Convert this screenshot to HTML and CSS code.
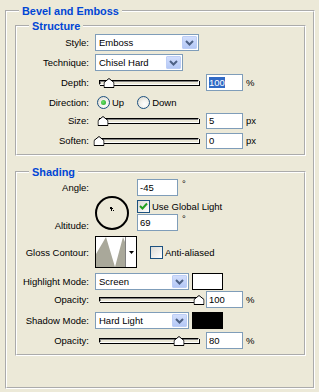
FILE: index.html
```html
<!DOCTYPE html>
<html>
<head>
<meta charset="utf-8">
<link rel="stylesheet" href="styles.css">
</head>
<body>
<div class="panel">
  <fieldset class="group outer">
    <legend class="title title-outer">Bevel and Emboss</legend>

    <fieldset class="group structure">
      <legend class="title">Structure</legend>

      <div class="row">
        <span class="lbl">Style:</span>
        <div class="ctrl">
          <div class="select sel-style"><span class="sel-text">Emboss</span><span class="drop"><svg width="9" height="6" viewBox="0 0 9 6"><path d="M1 1 L4.5 4.5 L8 1" stroke="#4D6185" stroke-width="2" fill="none"/></svg></span></div>
        </div>
      </div>

      <div class="row">
        <span class="lbl">Technique:</span>
        <div class="ctrl">
          <div class="select sel-tech"><span class="sel-text">Chisel Hard</span><span class="drop"><svg width="9" height="6" viewBox="0 0 9 6"><path d="M1 1 L4.5 4.5 L8 1" stroke="#4D6185" stroke-width="2" fill="none"/></svg></span></div>
        </div>
      </div>

      <div class="row">
        <span class="lbl">Depth:</span>
        <div class="ctrl">
          <div class="slider"><div class="track"></div><svg class="thumb" style="left:10%" width="11" height="10" viewBox="0 0 11 10"><polygon points="0.5,4.5 5.5,0.5 10.5,4.5 10.5,9.5 0.5,9.5" fill="#fff" stroke="#000"/></svg></div>
          <div class="input"><span class="selected">100</span></div>
          <span class="unit">%</span>
        </div>
      </div>

      <div class="row row-dir">
        <span class="lbl">Direction:</span>
        <div class="ctrl">
          <span class="radio on"><i></i></span><span class="opt">Up</span>
          <span class="radio radio-down"></span><span class="opt">Down</span>
        </div>
      </div>

      <div class="row row-size">
        <span class="lbl">Size:</span>
        <div class="ctrl">
          <div class="slider"><div class="track"></div><svg class="thumb" style="left:4%" width="11" height="10" viewBox="0 0 11 10"><polygon points="0.5,4.5 5.5,0.5 10.5,4.5 10.5,9.5 0.5,9.5" fill="#fff" stroke="#000"/></svg></div>
          <div class="input">5</div>
          <span class="unit">px</span>
        </div>
      </div>

      <div class="row row-soften">
        <span class="lbl">Soften:</span>
        <div class="ctrl">
          <div class="slider"><div class="track"></div><svg class="thumb" style="left:0%" width="11" height="10" viewBox="0 0 11 10"><polygon points="0.5,4.5 5.5,0.5 10.5,4.5 10.5,9.5 0.5,9.5" fill="#fff" stroke="#000"/></svg></div>
          <div class="input">0</div>
          <span class="unit">px</span>
        </div>
      </div>
    </fieldset>

    <fieldset class="group shading">
      <legend class="title">Shading</legend>

      <div class="angle-block">
        <span class="lbl lbl-angle">Angle:</span>
        <svg class="dial" width="36" height="36" viewBox="0 0 36 36">
          <circle cx="18" cy="18" r="16" fill="none" stroke="#000" stroke-width="2"/>
          <rect x="16" y="12" width="2" height="2" fill="#000"/>
          <rect x="18" y="13" width="1" height="1" fill="#000"/>
          <rect x="17" y="14" width="1" height="2" fill="#000"/>
          <rect x="19" y="15" width="1" height="1" fill="#000"/>
        </svg>
        <div class="ctrl ctrl-angle"><div class="input input-angle">-45</div><span class="deg">°</span></div>
        <div class="ctrl ctrl-global"><span class="check on"><svg width="11" height="11" viewBox="0 0 11 11"><path d="M2 5 L4.5 7.5 L9 2.5" stroke="#21A121" stroke-width="2" fill="none"/></svg></span><span class="opt">Use Global Light</span></div>
        <span class="lbl lbl-alt">Altitude:</span>
        <div class="ctrl ctrl-alt"><div class="input input-angle">69</div><span class="deg">°</span></div>
      </div>

      <div class="row row-gloss">
        <span class="lbl">Gloss Contour:</span>
        <div class="ctrl">
          <div class="contour">
            <svg width="29" height="30" viewBox="0 0 29 30"><polygon points="0,30 0,17 10,0 19,30 27,0 29,5 29,30" fill="#A9A89A"/></svg>
            <span class="contour-drop"><svg width="5" height="3" viewBox="0 0 5 3"><polygon points="0,0 5,0 2.5,3" fill="#000"/></svg></span>
          </div>
          <span class="check check-aa"></span><span class="opt">Anti-aliased</span>
        </div>
      </div>

      <div class="row row-mode">
        <span class="lbl">Highlight Mode:</span>
        <div class="ctrl">
          <div class="select sel-mode"><span class="sel-text">Screen</span><span class="drop"><svg width="9" height="6" viewBox="0 0 9 6"><path d="M1 1 L4.5 4.5 L8 1" stroke="#4D6185" stroke-width="2" fill="none"/></svg></span></div>
          <span class="swatch swatch-white"></span>
        </div>
      </div>

      <div class="row row-op">
        <span class="lbl">Opacity:</span>
        <div class="ctrl">
          <div class="slider"><div class="track"></div><svg class="thumb" style="left:100%" width="11" height="10" viewBox="0 0 11 10"><polygon points="0.5,4.5 5.5,0.5 10.5,4.5 10.5,9.5 0.5,9.5" fill="#fff" stroke="#000"/></svg></div>
          <div class="input">100</div>
          <span class="unit">%</span>
        </div>
      </div>

      <div class="row row-mode2">
        <span class="lbl">Shadow Mode:</span>
        <div class="ctrl">
          <div class="select sel-mode"><span class="sel-text">Hard Light</span><span class="drop"><svg width="9" height="6" viewBox="0 0 9 6"><path d="M1 1 L4.5 4.5 L8 1" stroke="#4D6185" stroke-width="2" fill="none"/></svg></span></div>
          <span class="swatch swatch-black"></span>
        </div>
      </div>

      <div class="row row-op2">
        <span class="lbl">Opacity:</span>
        <div class="ctrl">
          <div class="slider"><div class="track"></div><svg class="thumb" style="left:80%" width="11" height="10" viewBox="0 0 11 10"><polygon points="0.5,4.5 5.5,0.5 10.5,4.5 10.5,9.5 0.5,9.5" fill="#fff" stroke="#000"/></svg></div>
          <div class="input">80</div>
          <span class="unit">%</span>
        </div>
      </div>
    </fieldset>
  </fieldset>
</div>
</body>
</html>
```

FILE: styles.css
```css
* { box-sizing: border-box; }
html, body { margin: 0; padding: 0; }
body {
  background: #ECE9D8;
  width: 319px;
  height: 392px;
  overflow: hidden;
  font-family: "Liberation Sans", Arial, sans-serif;
  font-size: 9.5px;
  color: #000;
}
.panel { padding: 5px 4px 0 5px; }

.group {
  border: 2px groove #fff;
  margin: 0;
  min-width: 0;
}
.title {
  font-weight: bold;
  color: #0046D5;
  font-size: 10.9px;
  line-height: 12px;
  padding: 0 3px;
  margin-left: 12px;
}
.outer { padding: 3px 7px 31px 8px; }
.title-outer { margin-left: 4px; }

.structure { padding: 2px 0 6px 0; }
.shading { margin-top: 10px; padding: 1px 0 5px 0; }

.row {
  display: grid;
  grid-template-columns: 72px 1fr;
  column-gap: 6px;
  align-items: center;
  height: 17px;
  margin-top: 3px;
}
.structure legend + .row { margin-top: 0; }
.lbl { text-align: right; white-space: nowrap; }
.ctrl { display: flex; align-items: center; height: 100%; }

.select {
  display: flex;
  align-items: center;
  justify-content: space-between;
  height: 17px;
  background: #fff;
  border: 1px solid #7F9DB9;
  padding: 1px 1px 1px 3px;
}
.sel-style { width: 104px; }
.sel-tech { width: 88px; }
.sel-mode { width: 94px; }
.sel-text { white-space: nowrap; }
.drop {
  width: 15px;
  height: 13px;
  display: flex;
  align-items: center;
  justify-content: center;
  background: linear-gradient(#D2DEFC, #B4C8F6);
  border: 1px solid #BDCEF6;
  border-radius: 1px;
}

.slider {
  position: relative;
  width: 100px;
  margin: 0 7px 0 4px;
  height: 17px;
  display: flex;
  align-items: center;
}
.track {
  width: 100%;
  height: 5px;
  border: 1px solid #000;
  border-right-color: #fff;
  border-bottom-color: #fff;
  box-shadow: inset 1px 1px 0 #808080, 1px 1px 0 #000;
  background: #ECE9D8;
}
.thumb {
  position: absolute;
  top: 4px;
  transform: translateX(-50%);
}

.input {
  width: 37px;
  height: 17px;
  background: #fff;
  border: 1px solid #7F9DB9;
  padding: 0 2px;
  line-height: 15px;
}
.selected { background: #316AC5; color: #fff; }
.unit { margin-left: 3px; }
.deg { margin-left: 4px; align-self: flex-start; line-height: 10px; }

.row-dir { margin-top: 3px; }
.row-size { margin-top: 1px; height: 16px; }
.row-soften { margin-top: 4px; height: 16px; }
.row-size .input, .row-soften .input { height: 16px; line-height: 14px; }

.radio {
  width: 13px;
  height: 13px;
  border-radius: 50%;
  border: 1px solid #1C5180;
  background: radial-gradient(circle at 60% 65%, #fff 0%, #F4F3EE 40%, #D6D3C6 100%);
  display: inline-flex;
  align-items: center;
  justify-content: center;
  margin-left: 2px;
}
.radio.on i {
  width: 5px;
  height: 5px;
  border-radius: 50%;
  background: radial-gradient(circle at 40% 40%, #6BE36B, #21A121);
}
.radio-down { margin-left: 13px; }
.opt { margin-left: 2px; white-space: nowrap; }

.check {
  width: 13px;
  height: 13px;
  border: 1px solid #1C5180;
  background: linear-gradient(135deg, #DCDBD4, #fff);
  display: inline-flex;
  align-items: center;
  justify-content: center;
}

.angle-block {
  display: grid;
  grid-template-columns: 72px 36px auto;
  grid-template-rows: 17px 13px 17px;
  column-gap: 6px;
  row-gap: 0;
  align-items: center;
}
.lbl-angle { grid-column: 1; grid-row: 1; }
.dial { grid-column: 2; grid-row: 1 / 4; align-self: start; margin-top: 16px; margin-left: -1px; }
.ctrl-angle { grid-column: 3; grid-row: 1; }
.ctrl-global { grid-column: 3; grid-row: 2; margin-top: 8px; }
.lbl-alt { grid-column: 1; grid-row: 3; margin-top: 15px; }
.ctrl-alt { grid-column: 3; grid-row: 3; margin-top: 10px; }
.input-angle { width: 41px; }

.row-gloss { height: 32px; margin-top: 10px; }
.contour {
  width: 42px;
  height: 32px;
  border: 1px solid #000;
  background: #fff;
  display: flex;
}
.contour svg { display: block; }
.contour-drop {
  width: 11px;
  border-left: 1px solid #808080;
  display: flex;
  align-items: center;
  justify-content: center;
}
.check-aa { margin-left: 13px; }

.row-mode { margin-top: 5px; }
.row-op { margin-top: 1px; }
.row-mode2 { margin-top: 4px; }
.row-op2 { margin-top: 3px; }

.swatch {
  width: 31px;
  height: 17px;
  border: 1px solid #000;
  margin-left: 3px;
}
.swatch-white { background: #fff; }
.swatch-black { background: #000; }
```
